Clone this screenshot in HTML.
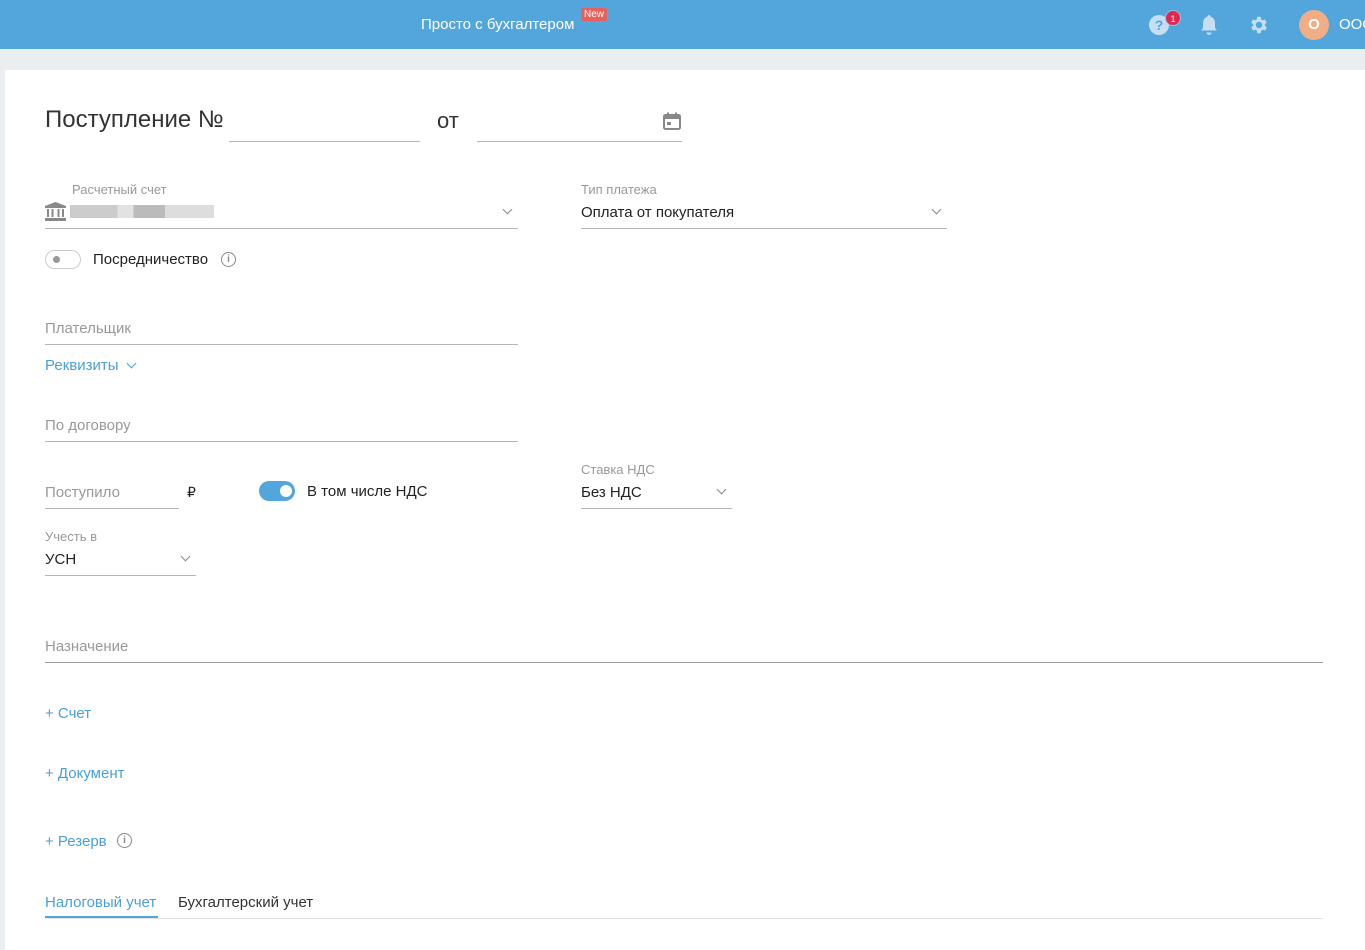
<!DOCTYPE html>
<html><head><meta charset="utf-8"><style>
*{box-sizing:border-box;margin:0;padding:0}
body{width:1365px;height:950px;overflow:hidden;background:#eaeef1;font-family:"Liberation Sans",sans-serif;position:relative;color:#333}
.top{position:absolute;left:0;top:0;width:1365px;height:49px;background:#53a6dc}
.card{position:absolute;left:5px;top:70px;width:1360px;height:880px;background:#fff}
.a{position:absolute}
.line{position:absolute;height:1px;background:#b5b5b5}
.lbl{position:absolute;font-size:13px;color:#999}
.ph{position:absolute;font-size:15px;color:#999}
.val{position:absolute;font-size:15px;color:#222}
.link{position:absolute;font-size:15px;color:#4a9fd8}
.chev{position:absolute;width:7px;height:7px;border-right:1.5px solid #888;border-bottom:1.5px solid #888;transform:rotate(45deg)}
.info{position:absolute;width:15px;height:15px;border:1.3px solid #888;border-radius:50%;font-size:10px;color:#888;text-align:center;line-height:13px;font-weight:bold}
</style></head><body>
<div class="top">
 <div class="a" style="left:421px;top:16px;color:#fff;font-size:15px">Просто с бухгалтером</div>
 <div class="a" style="left:581px;top:8px;background:#e8605d;color:#fff;font-size:10px;padding:1px 3px;border-radius:2px">New</div>
 <div class="a" style="left:1149px;top:15px;width:20px;height:20px;border-radius:50%;background:#c5def2;color:#53a6dc;font-weight:bold;font-size:14px;text-align:center;line-height:20px">?</div>
 <div class="a" style="left:1165px;top:10px;width:16px;height:16px;border-radius:50%;background:#e3264b;color:#fff;font-size:9px;text-align:center;line-height:16px;border:1px solid #8fc4ec">1</div>
 <svg class="a" style="left:1199px;top:14px" width="20" height="22" viewBox="0 0 20 22"><path d="M10 1c1 0 1.5.7 1.5 1.5C14.5 3.5 16 6 16 9v5l2 2.5H2L4 14V9c0-3 1.5-5.5 4.5-6.5C8.5 1.7 9 1 10 1zM7.5 18.5h5a2.5 2.5 0 01-5 0z" fill="#c5def2"/></svg>
 <svg class="a" style="left:1248px;top:14px" width="22" height="22" viewBox="0 0 24 24"><path fill="#c5def2" d="M19.4 13a7.5 7.5 0 000-2l2.1-1.6-2-3.5-2.5 1a7 7 0 00-1.7-1L15 3h-4l-.4 2.9a7 7 0 00-1.7 1l-2.5-1-2 3.5L6.6 11a7.5 7.5 0 000 2l-2.1 1.6 2 3.5 2.5-1a7 7 0 001.7 1L11 21h4l.4-2.9a7 7 0 001.7-1l2.5 1 2-3.5zM13 15.5a3.5 3.5 0 110-7 3.5 3.5 0 010 7z" transform="translate(-1 0)"/></svg>
 <div class="a" style="left:1299px;top:10px;width:30px;height:30px;border-radius:50%;background:#f1ae86;color:#fff;font-weight:bold;font-size:15px;text-align:center;line-height:30px">О</div>
 <div class="a" style="left:1339px;top:16px;color:#fff;font-size:15px">ООО</div>
</div>
<div class="card"></div>
<div class="a" style="left:45px;top:106px;font-size:24px;color:#333">Поступление №</div>
<div class="line" style="left:229px;top:141px;width:191px"></div>
<div class="a" style="left:437px;top:108px;font-size:22px;color:#333">от</div>
<div class="line" style="left:477px;top:141px;width:205px"></div>
<svg class="a" style="left:662px;top:111px" width="20" height="20" viewBox="0 0 20 20"><rect x="2" y="4" width="16" height="14" rx="1.5" fill="none" stroke="#888" stroke-width="2"/><rect x="2" y="4" width="16" height="4" fill="#888"/><rect x="5" y="1.5" width="2" height="4" fill="#888"/><rect x="13" y="1.5" width="2" height="4" fill="#888"/><rect x="5" y="11" width="4" height="3" fill="#888"/></svg>

<div class="lbl" style="left:72px;top:182px">Расчетный счет</div>
<svg class="a" style="left:45px;top:202px" width="21" height="19" viewBox="0 0 21 19"><path d="M10.5 0L0 4v2h21V4z" fill="#888"/><rect x="2" y="7" width="2" height="8" fill="#888"/><rect x="6.5" y="7" width="2" height="8" fill="#888"/><rect x="12.5" y="7" width="2" height="8" fill="#888"/><rect x="17" y="7" width="2" height="8" fill="#888"/><rect x="0" y="16" width="21" height="3" fill="#888"/></svg>
<div class="a" style="left:70px;top:205px;width:144px;height:13px;background:linear-gradient(90deg,#ccc 0 33%,#e2e2e2 33% 44%,#bbb 44% 66%,#ddd 66% 100%)"></div>
<div class="chev" style="left:504px;top:206px"></div>
<div class="line" style="left:45px;top:228px;width:473px"></div>
<div class="lbl" style="left:581px;top:182px">Тип платежа</div>
<div class="val" style="left:581px;top:204px;font-size:15px">Оплата от покупателя</div>
<div class="chev" style="left:933px;top:206px"></div>
<div class="line" style="left:581px;top:228px;width:366px"></div>

<div class="a" style="left:45px;top:250px;width:36px;height:19px;border:1px solid #ccc;border-radius:10px"></div>
<div class="a" style="left:53px;top:256px;width:7px;height:7px;border-radius:50%;background:#999"></div>
<div class="val" style="left:93px;top:251px;font-size:15px">Посредничество</div>
<div class="info" style="left:221px;top:252px">i</div>

<div class="ph" style="left:45px;top:320px">Плательщик</div>
<div class="line" style="left:45px;top:344px;width:473px"></div>
<div class="link" style="left:45px;top:357px">Реквизиты</div>
<div class="chev" style="left:128px;top:360px;border-color:#4a9fd8"></div>

<div class="ph" style="left:45px;top:417px">По договору</div>
<div class="line" style="left:45px;top:441px;width:473px"></div>

<div class="ph" style="left:45px;top:484px">Поступило</div>
<div class="line" style="left:45px;top:508px;width:134px"></div>
<div class="val" style="left:187px;top:484px;font-size:14px">₽</div>
<div class="a" style="left:259px;top:481px;width:36px;height:20px;border-radius:10px;background:#53a6dc"></div>
<div class="a" style="left:280px;top:485px;width:12px;height:12px;border-radius:50%;background:#fff"></div>
<div class="val" style="left:307px;top:483px">В том числе НДС</div>
<div class="lbl" style="left:581px;top:462px">Ставка НДС</div>
<div class="val" style="left:581px;top:484px">Без НДС</div>
<div class="chev" style="left:718px;top:486px"></div>
<div class="line" style="left:581px;top:508px;width:151px"></div>

<div class="lbl" style="left:45px;top:529px">Учесть в</div>
<div class="val" style="left:45px;top:551px">УСН</div>
<div class="chev" style="left:182px;top:553px"></div>
<div class="line" style="left:45px;top:575px;width:151px"></div>

<div class="ph" style="left:45px;top:638px">Назначение</div>
<div class="line" style="left:45px;top:662px;width:1278px;background:#999"></div>

<div class="link" style="left:45px;top:705px">+ Счет</div>
<div class="link" style="left:45px;top:765px">+ Документ</div>
<div class="link" style="left:45px;top:833px">+ Резерв</div>
<div class="info" style="left:117px;top:833px">i</div>

<div class="link" style="left:45px;top:894px">Налоговый учет</div>
<div class="val" style="left:178px;top:894px;color:#333">Бухгалтерский учет</div>
<div class="line" style="left:45px;top:918px;width:1278px;background:#e2e2e2"></div>
<div class="a" style="left:45px;top:916px;width:113px;height:2px;background:#53a6dc"></div>
</body></html>
